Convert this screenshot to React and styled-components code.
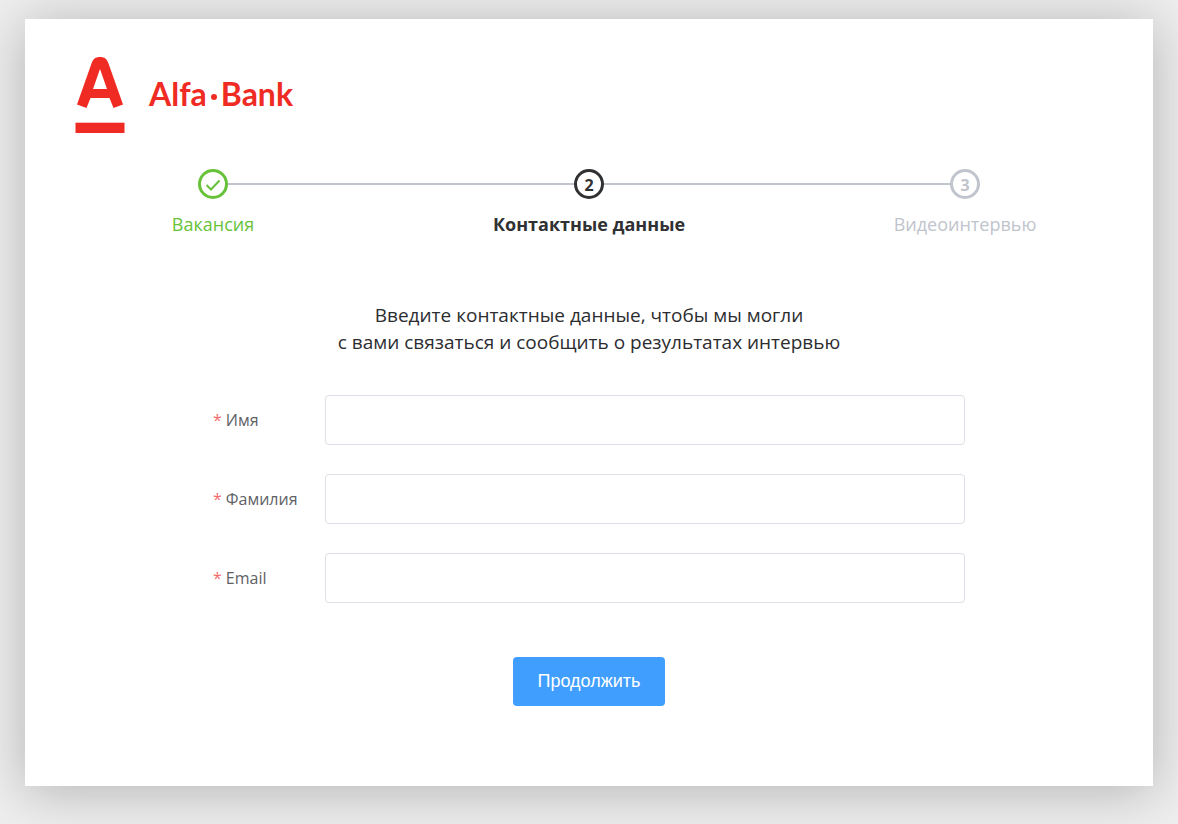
import React from "react";
import styled, { createGlobalStyle, css } from "styled-components";

const GlobalStyle = createGlobalStyle`
  *, *::before, *::after { box-sizing: border-box; }
  body {
    margin: 0;
    background: #eee;
    color: #2c2d30;
    font-family: "Open Sans", "Noto Sans", sans-serif;
  }
`;

const Page = styled.div`
  display: flex;
  min-height: 100vh;
  padding: 19px 25px 38px;
`;

const Card = styled.main`
  display: flex;
  flex: 1;
  flex-direction: column;
  padding-bottom: 80px;
  background: #fff;
  box-shadow: 0 5px 50px rgba(0, 0, 0, 0.25);
`;

const Brand = styled.header`
  display: flex;
  align-items: center;
  gap: 24px;
  padding: 38px 50px 0;
`;

const BrandName = styled.span`
  display: flex;
  align-items: center;
  gap: 4px;
  padding-bottom: 2px;
  color: #ef2b24;
  font: 700 32px/40px Lato, sans-serif;
`;

const Dot = styled.span`
  width: 6px;
  height: 6px;
  margin-top: 5px;
  border-radius: 50%;
  background: currentColor;
`;

const Steps = styled.ol`
  display: grid;
  grid-template-columns: repeat(3, 1fr);
  margin: 36px 0 0;
  padding: 0;
  list-style: none;
`;

const stepColors = { done: "#67c23a", current: "#303133", waiting: "#c0c4cc" };

const Step = styled.li`
  position: relative;
  display: flex;
  flex-direction: column;
  align-items: center;
  gap: 12px;
  color: ${({ $state }) => stepColors[$state]};

  ${({ $last }) =>
    !$last &&
    css`
      &::after {
        content: "";
        position: absolute;
        top: 14px;
        left: 50%;
        width: 100%;
        height: 2px;
        background: #c0c4cc;
      }
    `}
`;

const StepMark = styled.span`
  z-index: 1;
  display: flex;
  align-items: center;
  justify-content: center;
  width: 30px;
  height: 30px;
  padding-top: 2px;
  border: 3px solid currentColor;
  border-radius: 50%;
  background: #fff;
  font-size: 16px;
  font-weight: 700;
  line-height: 22px;
`;

const StepTitle = styled.span`
  font-size: 18px;
  font-weight: ${({ $state }) => ($state === "current" ? 700 : 400)};
  line-height: 27px;
`;

const Intro = styled.p`
  margin: 64px 0 39px;
  font-size: 19px;
  line-height: 27px;
  text-align: center;
`;

const Form = styled.form`
  display: flex;
  flex-direction: column;
  gap: 29px;
  width: 100%;
  max-width: 752px;
  margin: 0 auto;
`;

const Field = styled.div`
  display: flex;
  align-items: center;
`;

const Label = styled.label`
  flex: 0 0 112px;
  color: #606266;
  font-size: 16px;
  line-height: 24px;

  &::before {
    content: "*";
    margin-right: 4px;
    color: #f56c6c;
  }
`;

const Input = styled.input`
  flex: 1;
  min-width: 0;
  height: 50px;
  padding: 0 15px;
  border: 1px solid #dcdfe6;
  border-radius: 4px;
  background: #fff;
  color: #606266;
  font: inherit;
  font-size: 16px;
`;

const Submit = styled.button`
  align-self: center;
  margin-top: 25px;
  padding: 14px 25px 15px;
  border: 0;
  border-radius: 4px;
  background: #409eff;
  color: #fff;
  font: 18px/20px "Liberation Sans", sans-serif;
`;

const steps = [
  { title: "Вакансия", state: "done" },
  { title: "Контактные данные", state: "current" },
  { title: "Видеоинтервью", state: "waiting" },
];

const fields = [
  { id: "first-name", label: "Имя", type: "text" },
  { id: "last-name", label: "Фамилия", type: "text" },
  { id: "email", label: "Email", type: "email" },
];

const BankMark = () => (
  <svg width="50" height="76" viewBox="0 0 50 76" fill="#ef2b24" aria-hidden="true">
    <path
      fillRule="evenodd"
      d="M2 47.500 16.500 6.500C18 2 20.500 0 25 0s7 2 8.500 6.500L48 47.500 38.500 51 34.500 41H15.500L11.500 51ZM25 12 18 32H32Z"
    />
    <rect x="0.500" y="65.700" width="49" height="10.300" />
  </svg>
);

const Check = () => (
  <svg width="16" height="14" viewBox="0 0 16 14" fill="none" stroke="currentColor" strokeWidth="2" aria-hidden="true">
    <path d="M1.500 7 6 11.500 14.500 2.500" />
  </svg>
);

export default function App() {
  return (
    <>
      <GlobalStyle />
      <Page>
        <Card>
          <Brand>
            <BankMark />
            <BrandName>
              <span>Alfa</span>
              <Dot />
              <span>Bank</span>
            </BrandName>
          </Brand>
          <Steps>
            {steps.map(({ title, state }, i) => (
              <Step key={title} $state={state} $last={i === steps.length - 1}>
                <StepMark>{state === "done" ? <Check /> : i + 1}</StepMark>
                <StepTitle $state={state}>{title}</StepTitle>
              </Step>
            ))}
          </Steps>
          <Intro>
            Введите контактные данные, чтобы мы могли
            <br />с вами связаться и сообщить о результатах интервью
          </Intro>
          <Form onSubmit={(e) => e.preventDefault()}>
            {fields.map(({ id, label, type }) => (
              <Field key={id}>
                <Label htmlFor={id}>{label}</Label>
                <Input id={id} type={type} required />
              </Field>
            ))}
            <Submit type="submit">Продолжить</Submit>
          </Form>
        </Card>
      </Page>
    </>
  );
}
